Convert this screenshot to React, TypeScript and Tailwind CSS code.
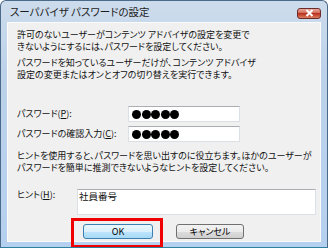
import type { ReactNode } from "react";

const jp = "font-['Noto_Sans_CJK_JP','Noto_Sans',sans-serif] [font-feature-settings:'palt']";

function Dots() {
  return (
    <div className="flex gap-[0.5px] pl-[3px]">
      {[0, 1, 2, 3, 4].map((i) => (
        <span key={i} className="size-[9px] rounded-full bg-black" />
      ))}
    </div>
  );
}

function Field({ label, children }: { label: ReactNode; children: ReactNode }) {
  return (
    <div className="flex items-center">
      <div className="w-[111px] text-[9px] leading-[12px] text-[#111]">{label}</div>
      <div className="flex h-[16px] w-[112px] items-center border border-[#dbdfe6] border-t-[#abadb3] bg-white">
        {children}
      </div>
    </div>
  );
}

function Button({ children, primary }: { children: ReactNode; primary?: boolean }) {
  return (
    <button
      className={`flex h-[15px] items-center justify-center rounded-[3px] border text-[9px] leading-none text-black ${
        primary
          ? "w-[70px] border-[#3c7fb1] bg-[linear-gradient(#eaf6fd_0%,#d9f0fc_50%,#bee6fd_50%,#a7d9f5_100%)]"
          : "w-[68px] border-[#707070] bg-[linear-gradient(#f2f2f2_0%,#ebebeb_50%,#dddddd_50%,#cfcfcf_100%)]"
      }`}
    >
      {children}
    </button>
  );
}

export default function App() {
  return (
    <div
      className={`relative flex h-[248px] w-[328px] flex-col overflow-hidden rounded-t-[6px] border border-[#4b6a89] border-b-[#2f7f9f] bg-[linear-gradient(#cddcec,#bcd2ea_30%,#b5d0ef)] ${jp}`}
    >
      {/* Title bar */}
      <div className="flex h-[21px] shrink-0 items-center justify-between pl-[9px] pr-[6px]">
        <span className="text-[10.5px] text-[#1b1b1b]">スーパバイザ パスワードの設定</span>
        <div className="mt-[3px] flex h-[11px] w-[24px] items-center justify-center rounded-[3px] border border-[#6d2a2a] bg-[linear-gradient(#e9a99b,#d0624f_50%,#b8321d_50%,#dc7c5e)]">
          <svg width="9" height="8" viewBox="0 0 9 8">
            <path d="M1.5 1 L7.5 7 M7.5 1 L1.5 7" stroke="#fff" strokeWidth="2" />
          </svg>
        </div>
      </div>

      {/* Content */}
      <div className="mx-[6px] flex h-[220px] flex-col bg-[#f0f0f0] pl-[10px] shadow-[inset_0_0_0_1px_#fbfbfb] text-[#111]">
        <p className="mt-[7px] text-[9px] leading-[12px] whitespace-nowrap">
          許可のないユーザーがコンテンツ アドバイザの設定を変更で
          <br />
          きないようにするには、パスワードを設定してください。
        </p>
        <p className="mt-[4px] text-[9px] leading-[12px] whitespace-nowrap">
          パスワードを知っているユーザーだけが、コンテンツ アドバイザ
          <br />
          設定の変更またはオンとオフの切り替えを実行できます。
        </p>

        <div className="mt-[25px]">
          <Field
            label={
              <>
                パスワード(<span className="underline">P</span>):
              </>
            }
          >
            <Dots />
          </Field>
        </div>
        <div className="mt-[4px]">
          <Field
            label={
              <>
                パスワードの確認入力(<span className="underline">C</span>):
              </>
            }
          >
            <Dots />
          </Field>
        </div>

        <p className="mt-[8px] text-[9px] leading-[12px] whitespace-nowrap">
          ヒントを使用すると、パスワードを思い出すのに役立ちます。ほかのユーザーが
          <br />
          パスワードを簡単に推測できないようなヒントを設定してください。
        </p>

        <div className="mt-[15px] flex items-start">
          <div className="w-[60px] text-[9px] leading-[12px]">
            ヒント(<span className="underline">H</span>):
          </div>
          <div className="h-[26px] w-[239px] border border-[#dbdfe6] border-t-[#abadb3] bg-white pl-[1px] text-[9.5px] leading-[13px]">
            社員番号
          </div>
        </div>

        <div className="mt-[9px] flex gap-[23px] pl-[66px]">
          <Button primary>OK</Button>
          <Button>キャンセル</Button>
        </div>
      </div>

      {/* Highlight annotation */}
      <div className="absolute left-[70px] top-[217px] h-[30px] w-[92px] border-[3px] border-[#f00000]" />
    </div>
  );
}
